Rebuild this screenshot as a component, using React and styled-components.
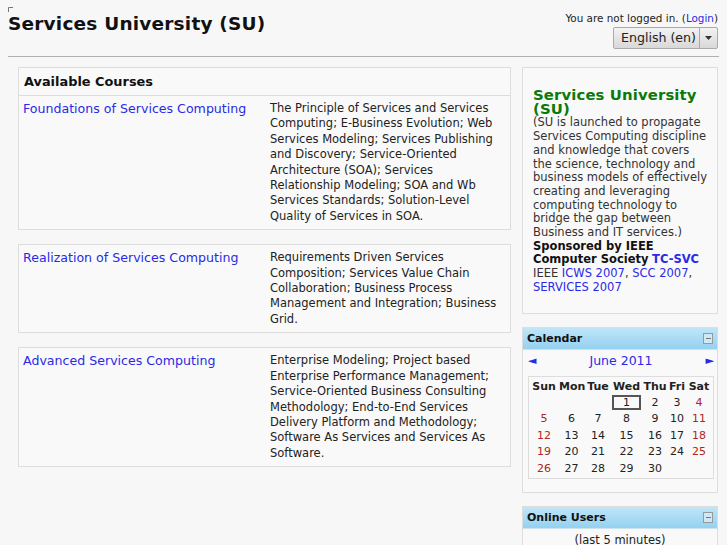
import React from "react";
import styled, { createGlobalStyle } from "styled-components";

const Global = createGlobalStyle`
  html, body { margin: 0; padding: 0; }
  body {
    background: #f7f7f7;
    font-family: "DejaVu Sans", "Noto Sans", sans-serif;
    color: #222;
    font-size: 12px;
  }
  a { color: #2a2ae6; text-decoration: none; }
`;

const Page = styled.div`
  padding: 0 8px;
  width: 727px;
  box-sizing: border-box;
`;

const Header = styled.header`
  display: flex;
  justify-content: space-between;
  align-items: flex-start;
  height: 56px;
  border-bottom: 1px solid #b0b0b0;
  position: relative;
`;

const Logo = styled.h1`
  margin: 13px 0 0 0;
  font-size: 18.5px;
  font-weight: bold;
  color: #111;
  letter-spacing: 0.2px;
`;

const Corner = styled.svg`
  position: absolute;
  left: 0;
  top: 7px;
`;

const HeaderRight = styled.div`
  display: flex;
  flex-direction: column;
  align-items: flex-end;
  padding-top: 12px;
  margin-right: 1px;
`;

const LoginInfo = styled.div`
  font-size: 10.4px;
  color: #222;
  line-height: 13px;
`;

const Select = styled.div`
  display: flex;
  margin-top: 2px;
  height: 20px;
  border: 1px solid #aaa;
  border-radius: 2px;
  background: linear-gradient(#f3f3f3, #d8d8d8);
  font-size: 12.6px;
  color: #222;
`;

const SelectLabel = styled.span`
  padding: 0 3px 0 7px;
  line-height: 20px;
`;

const SelectArrow = styled.span`
  width: 17px;
  border-left: 1px solid #aaa;
  display: flex;
  align-items: center;
  justify-content: center;
`;

const Columns = styled.div`
  display: flex;
  gap: 11px;
  padding: 10px 0 0 10px;
`;

const Main = styled.main`
  width: 493px;
  display: flex;
  flex-direction: column;
`;

const Side = styled.aside`
  width: 196px;
  display: flex;
  flex-direction: column;
  gap: 13px;
`;

const SectionHead = styled.div`
  height: 27px;
  border: 1px solid #ddd;
  background: #f9f9f9;
  font-weight: bold;
  font-size: 12.9px;
  line-height: 27px;
  padding-left: 5px;
  color: #111;
`;

const Course = styled.div`
  display: grid;
  grid-template-columns: 247px 1fr;
  border: 1px solid #ddd;
  border-top: ${(p) => (p.$first ? "none" : "1px solid #ddd")};
  background: #f9f9f9;
  padding: 5px 8px 5px 4px;
  min-height: ${(p) => p.$h}px;
  box-sizing: border-box;
  margin-bottom: ${(p) => (p.$last ? 0 : 14)}px;
`;

const CourseName = styled.a`
  font-size: 12.6px;
  line-height: 16px;
`;

const Summary = styled.div`
  font-size: 11.5px;
  line-height: 15.4px;
  color: #222;
`;

const Block = styled.div`
  border: 1px solid #ddd;
  background: #f9f9f9;
`;

const InfoBlock = styled(Block)`
  padding: 21px 8px 18px 10px;
  font-size: 11.5px;
  line-height: 13.7px;
  color: #333;
`;

const InfoTitle = styled.div`
  color: #0a7a0a;
  font-weight: bold;
  font-size: 14.9px;
  line-height: 13.7px;
  letter-spacing: 0.1px;
`;

const Bold = styled.b`
  color: #111;
`;

const BlockHead = styled.div`
  height: 21px;
  display: flex;
  align-items: center;
  justify-content: space-between;
  padding: 0 4px 0 4px;
  background: linear-gradient(#bfe6f8, #94d1f0);
  border-bottom: 1px solid #cfe3ee;
  font-weight: bold;
  font-size: 11px;
  color: #111;
`;

const Collapse = styled.span`
  width: 8px;
  height: 9px;
  border: 1px solid #999;
  background: #cde9f6;
  display: flex;
  align-items: center;
  justify-content: center;
  &::after {
    content: "";
    width: 5px;
    height: 1px;
    background: #777;
  }
`;

const CalBody = styled.div`
  padding: 1px 3px 13px 5px;
`;

const MonthRow = styled.div`
  display: flex;
  justify-content: space-between;
  align-items: center;
  height: 20px;
  margin-bottom: 5px;
  font-size: 12.5px;
`;

const Arrow = styled.span`
  color: #2a2ae6;
  font-size: 11px;
`;

const CalTable = styled.div`
  border: 1px solid #ddd;
  display: grid;
  grid-template-columns: 30px 25px 28px 29px 28px 16px 28px;
  padding: 2px 0 1px 0;
  width: 186px;
  box-sizing: border-box;
`;

const DayHead = styled.div`
  font-weight: bold;
  text-align: center;
  font-size: 11px;
  height: 16px;
  line-height: 16px;
`;

const Day = styled.div`
  text-align: center;
  font-size: 11px;
  height: 16.5px;
  line-height: 16.5px;
  color: ${(p) => (p.$weekend ? "#b02525" : "#222")};
`;

const Today = styled.span`
  display: inline-block;
  box-sizing: border-box;
  width: 29px;
  height: 15px;
  line-height: 11px;
  border: 2px solid #555;
  vertical-align: middle;
`;

const OnlineBody = styled.div`
  text-align: center;
  font-size: 11.5px;
  padding: 4px 0 4px;
  color: #222;
`;

const courses = [
  {
    name: "Foundations of Services Computing",
    summary:
      "The Principle of Services and Services Computing; E-Business Evolution; Web Services Modeling; Services Publishing and Discovery; Service-Oriented Architecture (SOA); Services Relationship Modeling; SOA and Wb Services Standards; Solution-Level Quality of Services in SOA.",
    h: 134,
  },
  {
    name: "Realization of Services Computing",
    summary:
      "Requirements Driven Services Composition; Services Value Chain Collaboration; Business Process Management and Integration; Business Grid.",
    h: 89,
  },
  {
    name: "Advanced Services Computing",
    summary:
      "Enterprise Modeling; Project based Enterprise Performance Management; Service-Oriented Business Consulting Methodology; End-to-End Services Delivery Platform and Methodology; Software As Services and Services As Software.",
    h: 119,
  },
];

const days = ["Sun", "Mon", "Tue", "Wed", "Thu", "Fri", "Sat"];

function Calendar() {
  const cells = [];
  for (let i = 0; i < 3; i++) cells.push(<Day key={"e" + i} />);
  for (let d = 1; d <= 30; d++) {
    const col = (d + 2) % 7;
    const weekend = col === 0 || col === 6;
    cells.push(
      <Day key={d} $weekend={weekend}>
        {d === 1 ? <Today>1</Today> : d}
      </Day>
    );
  }
  return (
    <Block>
      <BlockHead>
        <span>Calendar</span>
        <Collapse />
      </BlockHead>
      <CalBody>
        <MonthRow>
          <Arrow>◄</Arrow>
          <a href="#">June 2011</a>
          <Arrow>►</Arrow>
        </MonthRow>
        <CalTable>
          {days.map((d) => (
            <DayHead key={d}>{d}</DayHead>
          ))}
          {cells}
        </CalTable>
      </CalBody>
    </Block>
  );
}

export default function App() {
  return (
    <>
      <Global />
      <Page>
        <Header>
          <Corner width="5" height="5" viewBox="0 0 5 5">
            <path d="M0.5 5V0.5H5" stroke="#777" fill="none" />
          </Corner>
          <Logo>Services University (SU)</Logo>
          <HeaderRight>
            <LoginInfo>
              You are not logged in. (<a href="#">Login</a>)
            </LoginInfo>
            <Select>
              <SelectLabel>English (en)</SelectLabel>
              <SelectArrow>
                <svg width="7" height="4" viewBox="0 0 7 4">
                  <path d="M0 0H7L3.5 4Z" fill="#333" />
                </svg>
              </SelectArrow>
            </Select>
          </HeaderRight>
        </Header>
        <Columns>
          <Main>
            <SectionHead>Available Courses</SectionHead>
            {courses.map((c, i) => (
              <Course
                key={c.name}
                $first={i === 0}
                $last={i === courses.length - 1}
                $h={c.h}
              >
                <CourseName href="#">{c.name}</CourseName>
                <Summary>{c.summary}</Summary>
              </Course>
            ))}
          </Main>
          <Side>
            <InfoBlock>
              <InfoTitle>Services University (SU)</InfoTitle>
              (SU is launched to propagate Services Computing discipline and
              knowledge that covers the science, technology and business models
              of effectively creating and leveraging computing technology to
              bridge the gap between Business and IT services.)
              <br />
              <Bold>Sponsored by IEEE Computer Society</Bold>{" "}
              <a href="#">
                <b>TC-SVC</b>
              </a>
              <br />
              IEEE <a href="#">ICWS 2007</a>, <a href="#">SCC 2007</a>,{" "}
              <a href="#">SERVICES 2007</a>
            </InfoBlock>
            <Calendar />
            <Block>
              <BlockHead>
                <span>Online Users</span>
                <Collapse />
              </BlockHead>
              <OnlineBody>(last 5 minutes)</OnlineBody>
            </Block>
          </Side>
        </Columns>
      </Page>
    </>
  );
}
